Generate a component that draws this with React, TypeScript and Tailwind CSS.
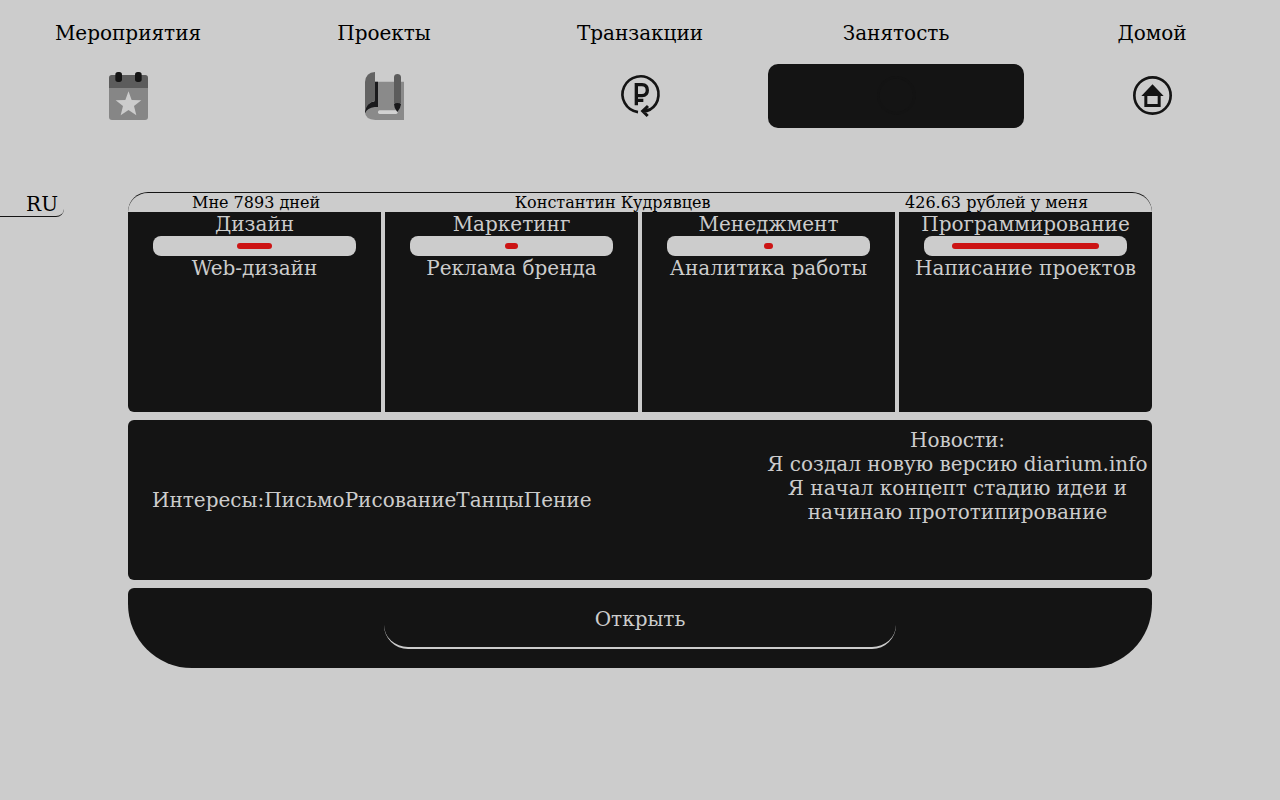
import type { ReactNode } from 'react';

const iconClass = 'size-16';

function EventsIcon() {
  return (
    <svg viewBox="-6 6 192 192" className={iconClass} aria-hidden="true">
      <path d="M33 77H150V165Q150 174 141 174H42Q33 174 33 165Z" fill="#868686" />
      <path d="M33 78V47Q33 39 41 39H142Q150 39 150 47V78Z" fill="#5c5c5c" />
      <rect x="52" y="30" width="20" height="30" rx="8" fill="#141414" />
      <rect x="111" y="30" width="20" height="30" rx="8" fill="#141414" />
      <path
        d="M91.500 88L101 114L130 115L108 132L115 160L91.500 144L68 160L75 132L53 115L82 114Z"
        fill="#ccc"
      />
    </svg>
  );
}

function ProjectsIcon() {
  return (
    <svg viewBox="-6 6 192 192" className={iconClass} aria-hidden="true">
      <path d="M60 59H150V174H64Q33 172 33 149Q38 124 60 122Z" fill="#8a8a8a" />
      <path d="M62 59H72V135H62Q40 137 33 154V145Q36 122 62 118Z" fill="#1a1a1c" />
      <path d="M33 150V60Q35 32 63 30V117Q38 122 33 150Z" fill="#636363" />
      <rect x="72" y="145" width="59" height="11" rx="5" fill="#d2d2d2" />
      <path d="M120 124V45Q121 36 130 36Q140 36 141 45V124Z" fill="#5c5c5c" />
      <path d="M120 127Q121 123 130 123Q140 123 141 127Q140 139 130 150Q120 139 120 127Z" fill="#18181a" />
    </svg>
  );
}

function TransactionsIcon() {
  return (
    <svg viewBox="-6 6 192 192" className={iconClass} fill="none" stroke="#141414" aria-hidden="true">
      <path d="M84 150.500A54 54 0 1 1 120 142.900" strokeWidth="8" />
      <path d="M114 132L98 147L113 162M98 147Q112 147 121 142" strokeWidth="9" />
      <path d="M79 130V68H96Q112 69 112 84.500Q112 100 96 101H75M75 115H100" strokeWidth="10" />
    </svg>
  );
}

function EmploymentIcon() {
  return (
    <svg viewBox="0 6 192 192" className={iconClass} fill="none" stroke="#131313" aria-hidden="true">
      <circle cx="97" cy="100" r="54" strokeWidth="8" />
    </svg>
  );
}

function HomeIcon() {
  return (
    <svg viewBox="0 6 192 192" className={iconClass} aria-hidden="true">
      <circle cx="97.500" cy="100.500" r="54.500" fill="none" stroke="#141414" strokeWidth="8" />
      <path d="M97.500 67L131 102H122V135H73V102H64Z" fill="#141414" />
      <rect x="82" y="102" width="31" height="24" fill="#ccc" />
    </svg>
  );
}

const navItems: { label: string; icon: ReactNode; active?: boolean }[] = [
  { label: 'Мероприятия', icon: <EventsIcon /> },
  { label: 'Проекты', icon: <ProjectsIcon /> },
  { label: 'Транзакции', icon: <TransactionsIcon /> },
  { label: 'Занятость', icon: <EmploymentIcon />, active: true },
  { label: 'Домой', icon: <HomeIcon /> },
];

const skills = [
  { title: 'Дизайн', task: 'Web-дизайн', share: 17.2 },
  { title: 'Маркетинг', task: 'Реклама бренда', share: 6.4 },
  { title: 'Менеджмент', task: 'Аналитика работы', share: 4.4 },
  { title: 'Программирование', task: 'Написание проектов', share: 72.4 },
];

const interests = ['Письмо', 'Рисование', 'Танцы', 'Пение'];

const news = [
  'Я создал новую версию diarium.info',
  'Я начал концепт стадию идеи и начинаю прототипирование',
];

export default function App() {
  return (
    <div className="min-h-screen bg-[#ccc] font-['DejaVu_Serif',serif] text-[20px] leading-6 text-black">
      <nav className="grid grid-cols-5">
        {navItems.map((item) => (
          <a key={item.label} href="#" className="flex flex-col" aria-current={item.active ? 'page' : undefined}>
            <span className="flex h-16 items-center justify-center pt-0.5">{item.label}</span>
            <span
              className={
                item.active
                  ? 'flex justify-center rounded-[10px] bg-[#141414]'
                  : 'flex justify-center rounded-[10px]'
              }
            >
              {item.icon}
            </span>
          </a>
        ))}
      </nav>

      <div className="flex items-start pt-16">
        <div className="w-1/10">
          <button type="button" className="block w-1/2 rounded-br-lg border-b border-[#141414] pr-1.5 text-right">
            RU
          </button>
        </div>

        <main className="flex w-4/5 flex-col gap-2 text-[#ccc]">
          <section>
            <header className="flex h-5 items-center justify-between rounded-t-[20px] border-t border-[#141414] px-16 text-base text-black">
              <span>Мне 7893 дней</span>
              <span>Константин Кудрявцев</span>
              <span>426.63 рублей у меня</span>
            </header>
            <div className="grid grid-cols-4 gap-1 overflow-hidden rounded-b-md">
              {skills.map((skill) => (
                <article key={skill.title} className="flex min-h-[200px] flex-col items-center bg-[#141414] text-center">
                  <h2>{skill.title}</h2>
                  <div className="flex h-5 w-4/5 items-center justify-center rounded-lg bg-[#ccc]">
                    <div className="h-1.5 rounded-full bg-[#cc1414]" style={{ width: `${skill.share}%` }} />
                  </div>
                  <p>{skill.task}</p>
                </article>
              ))}
            </div>
          </section>

          <section className="flex min-h-40 justify-between rounded-md bg-[#141414]">
            <div className="flex items-center pl-6">
              <span>Интересы:</span>
              {interests.map((interest) => (
                <span key={interest}>{interest}</span>
              ))}
            </div>
            <div className="w-[389px] pt-2 text-center">
              <h2>Новости:</h2>
              {news.map((entry) => (
                <p key={entry}>{entry}</p>
              ))}
            </div>
          </section>

          <section className="flex h-20 items-center justify-center rounded-t-md rounded-b-[64px] bg-[#141414]">
            <button
              type="button"
              className="flex h-[42px] w-1/2 items-start justify-center rounded-b-3xl border-b-2 border-[#ccc]"
            >
              Открыть
            </button>
          </section>
        </main>
      </div>
    </div>
  );
}
